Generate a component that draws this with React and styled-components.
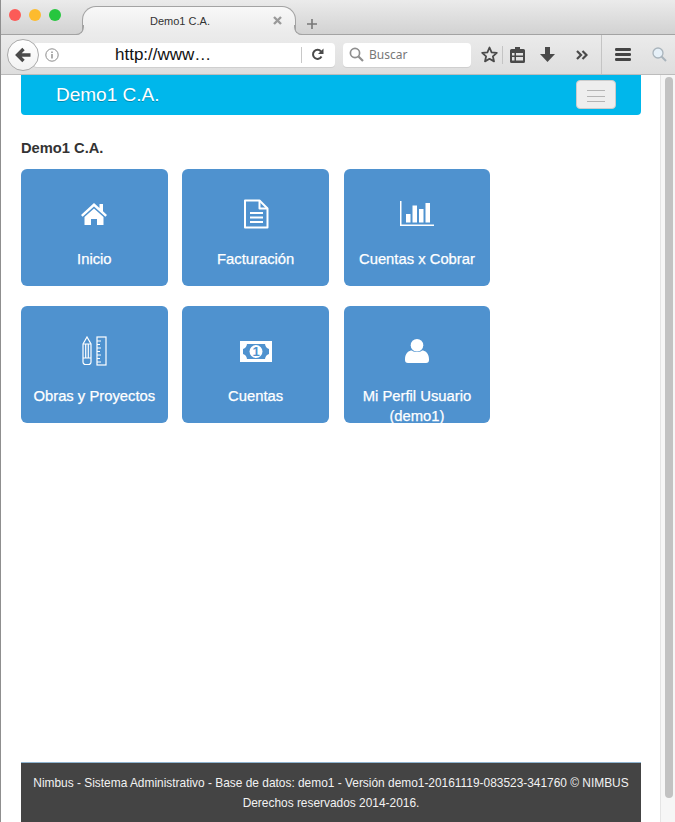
import React from 'react';
import styled, { createGlobalStyle } from 'styled-components';

const GlobalStyle = createGlobalStyle`
  html, body {
    margin: 0;
    padding: 0;
    background: #fff;
    overflow: hidden;
  }
  * { box-sizing: border-box; }
`;

const BrowserWindow = styled.div`
  width: 675px;
  height: 822px;
  display: flex;
  flex-direction: column;
  font-family: "Liberation Sans", Arial, sans-serif;
  border-left: 1px solid #8f8f8f;
  overflow: hidden;
`;

const TitleBar = styled.div`
  height: 35px;
  flex: none;
  display: flex;
  align-items: flex-end;
  padding-left: 8px;
  background: linear-gradient(#ebebeb, #d2d2d2);
  border-bottom: 1px solid #a3a3a3;
`;

const Lights = styled.div`
  display: flex;
  gap: 8px;
  align-self: flex-start;
  margin-top: 9px;
  width: 73px;
`;

const Light = styled.span`
  width: 12px;
  height: 12px;
  border-radius: 50%;
  background: ${props => props.$color};
`;

const Tab = styled.div`
  width: 214px;
  height: 29px;
  margin-bottom: -1px;
  display: flex;
  align-items: center;
  justify-content: center;
  position: relative;
  padding-right: 18px;
  font-size: 11px;
  color: #333;
  background: linear-gradient(#f8f8f8, #ebebeb);
  border: 1px solid #a3a3a3;
  border-bottom: 1px solid #ebebeb;
  border-radius: 14px 14px 0 0;

  /* the flared feet of the tab */
  &::before,
  &::after {
    content: '';
    position: absolute;
    bottom: -1px;
    width: 8px;
    height: 9px;
    border-bottom: 1px solid #a3a3a3;
  }
  &::before {
    left: -8px;
    border-right: 1px solid #a3a3a3;
    border-bottom-right-radius: 8px;
    box-shadow: 2px 2px 0 #ebebeb;
  }
  &::after {
    right: -8px;
    border-left: 1px solid #a3a3a3;
    border-bottom-left-radius: 8px;
    box-shadow: -2px 2px 0 #ebebeb;
  }
`;

const TabClose = styled.span`
  position: absolute;
  right: 12px;
  top: 8px;
  display: flex;
`;

const NewTab = styled.div`
  margin: 0 0 4px 10px;
  display: flex;
`;

const Toolbar = styled.div`
  height: 40px;
  flex: none;
  display: flex;
  align-items: center;
  padding-left: 6px;
  background: linear-gradient(#ebebeb, #dedede);
  border-bottom: 1px solid #bcbcbc;
`;

const BackButton = styled.div`
  width: 32px;
  height: 32px;
  flex: none;
  z-index: 1;
  display: flex;
  align-items: center;
  justify-content: center;
  border-radius: 50%;
  background: linear-gradient(#ffffff, #f2f2f2);
  border: 1px solid #a9a9a9;
`;

const AddressBar = styled.div`
  width: 302px;
  height: 24px;
  margin-left: -6px;
  flex: none;
  display: flex;
  align-items: center;
  padding-left: 12px;
  background: #fff;
  border-radius: 4px;
  box-shadow: 0 1px 0 #cfcfcf;
`;

const InfoSlot = styled.span`
  display: flex;
  width: 20px;
  flex: none;
`;

const Url = styled.span`
  width: 236px;
  flex: none;
  font-size: 17px;
  color: #111;
  padding-left: 50px;
  line-height: 24px;
`;

const ReloadSlot = styled.span`
  height: 16px;
  flex: 1;
  display: flex;
  align-items: center;
  justify-content: center;
  padding-right: 3px;
  border-left: 1px solid #c8c8c8;
`;

const SearchBar = styled.div`
  width: 128px;
  height: 24px;
  margin-left: 8px;
  flex: none;
  display: flex;
  align-items: center;
  gap: 5px;
  padding-left: 6px;
  font-family: "Noto Sans", sans-serif;
  font-size: 12px;
  line-height: 26px;
  color: #777;
  background: #fff;
  border-radius: 4px;
  box-shadow: 0 1px 0 #cfcfcf;
`;

const Tools = styled.div`
  height: 100%;
  margin-left: 5px;
  display: flex;
  align-items: center;
`;

const ToolButton = styled.span`
  width: ${props => props.$w}px;
  flex: none;
  display: flex;
  justify-content: center;
`;

const ToolSep = styled.span`
  width: 1px;
  flex: none;
  height: ${props => (props.$tall ? '100%' : '18px')};
  background: #c4c4c4;
`;

const PageArea = styled.div`
  flex: 1;
  min-height: 0;
  display: flex;
`;

const Page = styled.div`
  flex: 1;
  min-width: 0;
  display: flex;
  flex-direction: column;
  padding: 0 19px 0 20px;
  background: #fff;
`;

const Navbar = styled.nav`
  height: 40px;
  flex: none;
  display: flex;
  align-items: center;
  justify-content: space-between;
  padding: 0 25px 0 35px;
  background: #00b7eb;
  border-radius: 0 0 4px 4px;
`;

const Brand = styled.span`
  font-size: 19px;
  color: #fff;
  margin-top: -1px;
  text-shadow: 0 1px 0 rgba(0, 0, 0, 0.25);
`;

const Toggler = styled.button`
  width: 40px;
  height: 29px;
  margin-top: -1px;
  padding: 3px 0 0;
  display: flex;
  flex-direction: column;
  align-items: center;
  justify-content: center;
  gap: 4.5px;
  background: #eeeeee;
  border: 1px solid #cccccc;
  border-radius: 4px;
`;

const TogglerBar = styled.span`
  width: 18px;
  height: 1px;
  background: #b4b4b4;
`;

const Heading = styled.h1`
  margin: 24px 0 12px;
  font-size: 14.7px;
  line-height: 18px;
  font-weight: 700;
  color: #333;
`;

const TileGrid = styled.div`
  display: grid;
  grid-template-columns: repeat(3, 146.67px);
  grid-auto-rows: 117px;
  column-gap: 14.67px;
  row-gap: 20px;
`;

const Tile = styled.a`
  display: flex;
  flex-direction: column;
  align-items: center;
  padding: 15px 8px 0;
  background: #4f92cf;
  border-radius: 6px;
  color: #fff;
  overflow: hidden;
`;

const TileIcon = styled.div`
  height: 60px;
  flex: none;
  display: flex;
  align-items: center;
  justify-content: center;
  margin-bottom: 5px;
`;

const TileLabel = styled.span`
  font-size: 14.8px;
  line-height: 20px;
  text-align: center;
  -webkit-text-stroke: 0.25px #fff;
`;

const Footer = styled.footer`
  margin-top: auto;
  height: 60px;
  flex: none;
  padding-top: 10px;
  background: #444444;
  border-top: 1px solid #8fb4d0;
  color: #f2f2f2;
  font-size: 11.92px;
  line-height: 20px;
  text-align: center;
  white-space: nowrap;
`;

const Scrollbar = styled.div`
  width: 15px;
  flex: none;
  padding: 2px 2px 24px 4px;
  background: #f6f6f6;
  border-left: 1px solid #e4e4e4;
`;

const ScrollThumb = styled.div`
  height: 100%;
  border-radius: 4px;
  background: #c2c2c2;
`;

const HomeIcon = () => (
  <svg width="28" height="24" viewBox="0 0 28 24" fill="#fff">
    <path d="M14 1 L1 13 L2.6 14.8 L14 4.4 L25.4 14.8 L27 13 L23 9.3 V2 H19.5 V6 Z" />
    <path d="M14 6.4 L4.5 15 V23 H11 V17 H17 V23 H23.5 V15 Z" />
  </svg>
);

const DocIcon = () => (
  <svg width="26" height="30" viewBox="0 0 26 30" fill="none" stroke="#fff" strokeWidth="2">
    <path d="M2 1.5 H16.5 L24.5 9.5 V28.5 H2 Z" strokeLinejoin="round" />
    <path d="M16.5 1.5 V9.5 H24.5" strokeLinejoin="round" />
    <path d="M7 14 H20 M7 18.5 H20 M7 23 H20" />
  </svg>
);

const ChartIcon = () => (
  <svg width="34" height="26" viewBox="0 0 34 26" fill="#fff">
    <path d="M0 0 H1.5 V23.5 H34 V25 H0 Z" />
    <rect x="6" y="13" width="4.5" height="8.5" />
    <rect x="12.5" y="4.5" width="4.5" height="17" />
    <rect x="19" y="8" width="4.5" height="13.5" />
    <rect x="25.5" y="2" width="4.5" height="19.5" />
  </svg>
);

const ToolsIcon = () => (
  <svg width="25" height="30" viewBox="0 0 25 30" fill="none" stroke="#fff" strokeWidth="1.2">
    <path d="M1 8 L5 1 L9 8 V26 A2.5 2.5 0 0 1 6.5 28.5 H3.5 A2.5 2.5 0 0 1 1 26 Z" />
    <path d="M1 8 H9 M3.7 8 V22 M6.3 8 V22 M1 22 H9" />
    <rect x="15" y="1" width="9" height="28" />
    <path d="M15 5 H19 M15 8.5 H18 M15 12 H19 M15 15.5 H18 M15 19 H19 M15 22.5 H18 M15 26 H19" />
  </svg>
);

const MoneyIcon = () => (
  <svg width="32" height="21" viewBox="0 0 32 21">
    <path
      fill="#fff"
      fillRule="evenodd"
      d="M0 0 H32 V21 H0 Z M7 3 Q6.5 7 3 8 V13 Q6.5 14 7 18 H25 Q25.5 14 29 13 V8 Q25.5 7 25 3 Z"
    />
    <circle cx="16" cy="10.5" r="6.5" fill="#fff" />
    <text x="16" y="15" fontSize="13" fontWeight="700" textAnchor="middle" fill="#4f92cf" fontFamily="Liberation Sans">1</text>
  </svg>
);

const UserIcon = () => (
  <svg width="24" height="24" viewBox="0 0 24 24" fill="#fff">
    <circle cx="12" cy="6.3" r="6.3" />
    <path d="M0 20 C0 14 4 11.5 7 11.5 C9 13.5 15 13.5 17 11.5 C20 11.5 24 14 24 20 V21 Q24 24 21 24 H3 Q0 24 0 21 Z" />
  </svg>
);

const tiles = [
  { label: 'Inicio', icon: <HomeIcon /> },
  { label: 'Facturación', icon: <DocIcon /> },
  { label: 'Cuentas x Cobrar', icon: <ChartIcon /> },
  { label: 'Obras y Proyectos', icon: <ToolsIcon /> },
  { label: 'Cuentas', icon: <MoneyIcon /> },
  { label: 'Mi Perfil Usuario (demo1)', icon: <UserIcon /> },
];

function App() {
  return (
    <BrowserWindow>
      <GlobalStyle />
      <TitleBar>
        <Lights>
          <Light $color="#fc5b57" />
          <Light $color="#fdbb2e" />
          <Light $color="#27c63f" />
        </Lights>
        <Tab>
          Demo1 C.A.
          <TabClose>
            <svg width="11" height="11" viewBox="0 0 11 11" stroke="#9a9a9a" strokeWidth="2.4">
              <path d="M2 2 L9 9 M9 2 L2 9" />
            </svg>
          </TabClose>
        </Tab>
        <NewTab>
          <svg width="12" height="12" viewBox="0 0 12 12" stroke="#777" strokeWidth="1.6">
            <path d="M6 1 V11 M1 6 H11" />
          </svg>
        </NewTab>
      </TitleBar>
      <Toolbar>
        <BackButton>
          <svg width="16" height="16" viewBox="0 0 16 16" fill="none" stroke="#4a4a4a" strokeWidth="3.4">
            <path d="M8.5 2 L2.5 8 L8.5 14 M3 8 H15.5" />
          </svg>
        </BackButton>
        <AddressBar>
          <InfoSlot>
            <svg width="14" height="14" viewBox="0 0 14 14" fill="none" stroke="#8c8c8c">
              <circle cx="7" cy="7" r="6.2" />
              <path d="M7 6 V10.5 M7 3.5 V5" strokeWidth="1.4" />
            </svg>
          </InfoSlot>
          <Url>http://www…</Url>
          <ReloadSlot>
            <svg width="13" height="13" viewBox="0 0 13 13" fill="none" stroke="#4a4a4a" strokeWidth="2">
              <path d="M10.5 8.5 A4.5 4.5 0 1 1 10 3.5" />
              <path d="M12.5 0.5 V6 H7 Z" fill="#4a4a4a" stroke="none" />
            </svg>
          </ReloadSlot>
        </AddressBar>
        <SearchBar>
          <svg width="15" height="15" viewBox="0 0 15 15" fill="none" stroke="#8f8f8f" strokeWidth="1.7">
            <circle cx="6" cy="6" r="4.6" />
            <path d="M9.5 9.5 L14 14" strokeWidth="2.2" />
          </svg>
          Buscar
        </SearchBar>
        <Tools>
          <ToolButton $w={26}>
            <svg width="17" height="17" viewBox="0 0 17 17" fill="none" stroke="#4a4a4a" strokeWidth="1.8" strokeLinejoin="round">
              <path d="M8.5 1.5 L10.6 6.3 L15.8 6.8 L11.9 10.3 L13 15.4 L8.5 12.8 L4 15.4 L5.1 10.3 L1.2 6.8 L6.4 6.3 Z" />
            </svg>
          </ToolButton>
          <ToolSep />
          <ToolButton $w={28}>
            <svg width="15" height="16" viewBox="0 0 15 16" fill="#4a4a4a">
              <path
                fillRule="evenodd"
                d="M5 0 H10 V2 H13.5 Q15 2 15 3.5 V14.5 Q15 16 13.5 16 H1.5 Q0 16 0 14.5 V3.5 Q0 2 1.5 2 H5 Z M2 6 V8.5 H4.5 V6 Z M6 6 V8.5 H13 V6 Z M2 10 V13.5 H4.5 V10 Z M6 10 V13.5 H13 V10 Z"
              />
            </svg>
          </ToolButton>
          <ToolButton $w={32}>
            <svg width="15" height="15" viewBox="0 0 15 15" fill="#4a4a4a">
              <path d="M5 0 H10 V7 H15 L7.5 15 L0 7 H5 Z" />
            </svg>
          </ToolButton>
          <ToolButton $w={38}>
            <svg width="12" height="10" viewBox="0 0 12 10" fill="none" stroke="#4a4a4a" strokeWidth="2.2">
              <path d="M1 1 L5 5 L1 9 M6.5 1 L10.5 5 L6.5 9" />
            </svg>
          </ToolButton>
          <ToolSep $tall />
          <ToolButton $w={42}>
            <svg width="16" height="13" viewBox="0 0 16 13" fill="#444">
              <rect width="16" height="3" rx="1.2" />
              <rect y="5" width="16" height="3" rx="1.2" />
              <rect y="10" width="16" height="3" rx="1.2" />
            </svg>
          </ToolButton>
          <ToolButton $w={31}>
            <svg width="15" height="15" viewBox="0 0 15 15" fill="#e6f0f8" stroke="#a9b4bc" strokeWidth="1.3">
              <circle cx="6" cy="6" r="5" />
              <path d="M9.5 9.5 L14 14" strokeWidth="2" />
            </svg>
          </ToolButton>
        </Tools>
      </Toolbar>
      <PageArea>
        <Page>
          <Navbar>
            <Brand>Demo1 C.A.</Brand>
            <Toggler aria-label="Menu">
              <TogglerBar />
              <TogglerBar />
              <TogglerBar />
            </Toggler>
          </Navbar>
          <Heading>Demo1 C.A.</Heading>
          <TileGrid>
            {tiles.map(tile => (
              <Tile key={tile.label}>
                <TileIcon>{tile.icon}</TileIcon>
                <TileLabel>{tile.label}</TileLabel>
              </Tile>
            ))}
          </TileGrid>
          <Footer>
            Nimbus - Sistema Administrativo - Base de datos: demo1 - Versión demo1-20161119-083523-341760 © NIMBUS
            <br />
            Derechos reservados 2014-2016.
          </Footer>
        </Page>
        <Scrollbar>
          <ScrollThumb />
        </Scrollbar>
      </PageArea>
    </BrowserWindow>
  );
}

export default App;
